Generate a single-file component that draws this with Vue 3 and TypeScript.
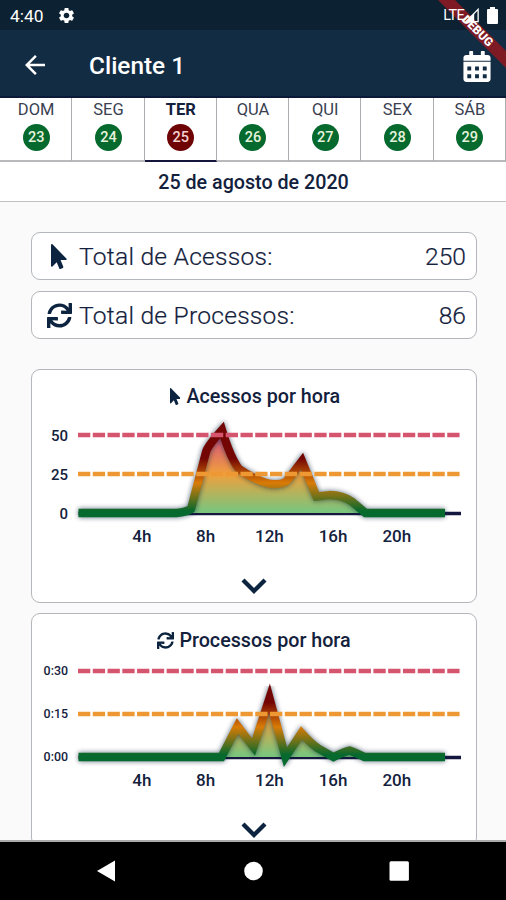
<script setup lang="ts">
interface Day {
  name: string
  num: number
  active?: boolean
}

interface Chart {
  id: string
  title: string
  icon: 'pointer' | 'sync'
  small: boolean
  labels: string[]
  step: number
  path: string
}

const BASE = 105
const X0 = 47

const days: Day[] = [
  { name: 'DOM', num: 23 },
  { name: 'SEG', num: 24 },
  { name: 'TER', num: 25, active: true },
  { name: 'QUA', num: 26 },
  { name: 'QUI', num: 27 },
  { name: 'SEX', num: 28 },
  { name: 'SÁB', num: 29 },
]

const charts: Chart[] = [
  {
    id: 'acessos',
    title: 'Acessos por hora',
    icon: 'pointer',
    small: false,
    labels: ['0', '25', '50'],
    step: 39,
    path: 'M47 105H145Q155 104 159.5 101L174.5 44Q176 38 190.500 22Q199 50 207.500 61C215 66 229 74 239 76Q252 77 256 72L270.500 53L285 88.500Q290 88 298 87Q311 87 321 94L334 105H413.500',
  },
  {
    id: 'processos',
    title: 'Processos por hora',
    icon: 'sync',
    small: true,
    labels: ['0:00', '0:15', '0:30'],
    step: 43,
    path: 'M47 105H190L206 74L222 95L238 46L254 105L270 81Q279 91 286 96L302 105Q312 100 318 98.500Q325 101 333 105H413.500',
  },
]

const hours = [4, 8, 12, 16, 20]
const hourX = (h: number): number => X0 - 0.3 + h * 15.93

const pointerPath =
  'M302.189 329.126H196.105l55.831 135.993c3.889 9.428-.555 19.999-9.444 23.999l-49.165 21.427c-9.165 4-19.443-.571-23.332-9.714l-53.053-129.136-86.664 89.138C18.729 472.71 0 463.554 0 447.977V18.299C0 1.899 19.921-6.096 30.277 5.443l284.412 292.542c11.472 11.179 3.007 31.141-12.5 31.141z'
const syncPath =
  'M440.65 12.57l4 82.77A247.16 247.16 0 0 0 255.83 8C134.73 8 33.91 94.92 12.29 209.82A12 12 0 0 0 24.09 224h49.05a12 12 0 0 0 11.67-9.26 175.91 175.91 0 0 1 317-56.94l-101.46-4.86a12 12 0 0 0-12.57 12v47.41a12 12 0 0 0 12 12H500a12 12 0 0 0 12-12V12a12 12 0 0 0-12-12h-47.37a12 12 0 0 0-11.98 12.57zM255.83 432a175.61 175.61 0 0 1-146-77.8l101.8 4.87a12 12 0 0 0 12.57-12v-47.4a12 12 0 0 0-12-12H12a12 12 0 0 0-12 12V500a12 12 0 0 0 12 12h47.35a12 12 0 0 0 12-12.6l-4.15-82.57A247.17 247.17 0 0 0 255.83 504c121.11 0 221.93-86.92 243.55-201.82a12 12 0 0 0-11.8-14.18h-49.05a12 12 0 0 0-11.67 9.26A175.86 175.86 0 0 1 255.83 432z'
</script>

<template>
  <div class="screen">
    <div class="status">
      <span class="clock">4:40</span>
      <svg class="gear" viewBox="0 0 24 24"><path d="M19.14 12.94c.04-.3.06-.61.06-.94 0-.32-.02-.64-.07-.94l2.030-1.580c.18-.14.23-.41.12-.61l-1.920-3.320c-.12-.22-.37-.29-.59-.22l-2.390.96c-.5-.38-1.030-.7-1.620-.94l-.36-2.540c-.04-.24-.24-.41-.48-.41h-3.840c-.24 0-.43.17-.47.41l-.36 2.540c-.59.24-1.130.57-1.620.94l-2.390-.96c-.22-.08-.47 0-.59.22L2.740 8.870c-.12.21-.08.47.12.61l2.030 1.580c-.05.3-.09.63-.09.94s.02.64.07.94l-2.030 1.580c-.18.14-.23.41-.12.61l1.920 3.320c.12.22.37.29.59.22l2.390-.96c.5.38 1.030.7 1.620.94l.36 2.540c.05.24.24.41.48.41h3.840c.24 0 .44-.17.47-.41l.36-2.540c.59-.24 1.130-.56 1.620-.94l2.390.96c.22.08.47 0 .59-.22l1.920-3.320c.12-.22.07-.47-.12-.61l-2.010-1.580zM12 15.600c-1.980 0-3.600-1.620-3.600-3.600s1.620-3.600 3.600-3.600 3.600 1.620 3.600 3.600-1.620 3.600-3.600 3.600z" /></svg>
      <span class="grow"></span>
      <span class="lte">LTE</span>
      <svg class="signal" viewBox="0 0 16 16"><path d="M1 15L15 1V15Z" fill="none" stroke="#fff" stroke-width="1.500" /><path d="M0 16L10.500 5.500V16Z" /></svg>
      <svg class="battery" viewBox="0 0 11 17"><path d="M3 0h5v2h2q1 0 1 1v13q0 1-1 1H1q-1 0-1-1V3q0-1 1-1h2z" /></svg>
    </div>
    <header class="appbar">
      <svg class="back" viewBox="0 0 24 24"><path d="M20 11H7.830l5.590-5.590L12 4l-8 8 8 8 1.410-1.410L7.830 13H20v-2z" /></svg>
      <h1>Cliente 1</h1>
      <svg class="calendar" viewBox="0 0 448 512"><path fill-rule="evenodd" d="M0 464c0 26.500 21.500 48 48 48h352c26.500 0 48-21.500 48-48V176H0zM64 256h64v64H64zM192 256h64v64h-64zM320 256h64v64h-64zM64 384h64v64H64zM192 384h64v64h-64zM320 384h64v64h-64zM400 64h-48V16c0-8.800-7.200-16-16-16h-32c-8.800 0-16 7.200-16 16v48H160V16c0-8.800-7.200-16-16-16h-32c-8.800 0-16 7.200-16 16v48H48C21.500 64 0 85.500 0 112v48h448v-48c0-26.500-21.500-48-48-48z" /></svg>
    </header>
    <svg class="ribbon" viewBox="0 0 70 70">
      <path d="M2 0H19L70 51V68Z" fill="#7d1a24" />
      <text transform="translate(41.500 31) rotate(45)" y="3.800" text-anchor="middle">DEBUG</text>
    </svg>

    <nav class="days">
      <div v-for="d in days" :key="d.num" class="day" :class="{ active: d.active }">
        <span class="name">{{ d.name }}</span>
        <span class="num">{{ d.num }}</span>
      </div>
    </nav>
    <div class="date">25 de agosto de 2020</div>

    <main class="content">
      <div class="total">
        <span class="slot"><svg class="pointer" viewBox="0 0 320 512"><path :d="pointerPath" /></svg></span>
        <span class="label">Total de Acessos:</span>
        <span>250</span>
      </div>
      <div class="total">
        <span class="slot"><svg class="sync" viewBox="0 0 512 512"><path :d="syncPath" /></svg></span>
        <span class="label">Total de Processos:</span>
        <span>86</span>
      </div>

      <section v-for="c in charts" :key="c.id" class="card" :class="c.id">
        <h2>
          <svg v-if="c.icon === 'pointer'" class="pointer" viewBox="0 0 320 512"><path :d="pointerPath" /></svg>
          <svg v-else class="sync" viewBox="0 0 512 512"><path :d="syncPath" /></svg>
          <span>{{ c.title }}</span>
        </h2>
        <svg class="plot" viewBox="0.500 0 444 145">
          <defs>
            <linearGradient :id="c.id + '-line'" gradientUnits="userSpaceOnUse" x1="0" y1="105" x2="0" y2="35">
              <stop offset="0.03" stop-color="#06692d" />
              <stop offset="0.43" stop-color="#d97b06" />
              <stop offset="0.78" stop-color="#730503" />
            </linearGradient>
            <linearGradient :id="c.id + '-fill'" gradientUnits="userSpaceOnUse" x1="0" y1="105" x2="0" y2="27">
              <stop offset="0.03" stop-color="#7cc47c" />
              <stop offset="0.5" stop-color="#f0a03c" />
              <stop offset="0.95" stop-color="#d5577a" />
            </linearGradient>
            <filter :id="c.id + '-blur'" x="-10%" y="-20%" width="120%" height="140%">
              <feGaussianBlur stdDeviation="2.5" />
            </filter>
          </defs>
          <line x1="47" y1="105.500" x2="429.500" y2="105.500" class="axis" />
          <path :d="c.path + 'V105H47Z'" :fill="`url(#${c.id}-fill)`" />
          <path :d="c.path" class="shadow" :filter="`url(#${c.id}-blur)`" />
          <path :d="c.path" class="series" :stroke="`url(#${c.id}-line)`" />
          <line x1="46.500" :y1="BASE - c.step" x2="428.500" :y2="BASE - c.step" class="limit warn" />
          <line x1="46.500" :y1="BASE - c.step * 2" x2="428.500" :y2="BASE - c.step * 2" class="limit crit" />
          <text v-for="(l, i) in c.labels" :key="l" x="36.500" :y="BASE - c.step * i + (c.small ? 4 : 5.5)" class="ylabel" :class="{ small: c.small }">{{ l }}</text>
          <text v-for="h in hours" :key="h" :x="hourX(h)" y="134" class="xlabel">{{ h }}h</text>
        </svg>
        <svg class="chevron" viewBox="0 0 26 18"><path d="M2 3L13 14L24 3" /></svg>
      </section>
    </main>

    <footer class="navbar">
      <svg viewBox="0 0 24 24"><path d="M2 12L20 1.500V22.500Z" /></svg>
      <svg viewBox="0 0 24 24"><circle cx="12.500" cy="12" r="9.300" /></svg>
      <svg viewBox="0 0 24 24"><rect x="2.500" y="2.300" width="19.400" height="19.400" rx="1.500" /></svg>
    </footer>
  </div>
</template>

<style>
body {
  margin: 0;
}
</style>

<style scoped>
.screen {
  position: relative;
  width: 506px;
  height: 900px;
  display: flex;
  flex-direction: column;
  overflow: hidden;
  background: linear-gradient(#0c2131 30px, #fafafa 30px);
  font-family: Roboto, sans-serif;
  color: #13213d;
}
.status {
  position: relative;
  z-index: 2;
  height: 30px;
  flex: none;
  display: flex;
  align-items: center;
  padding: 0 8px 0 10px;
  color: #fff;
  fill: #fff;
}
.clock {
  font-size: 17.4px;
  line-height: 30px;
  padding-top: 2px;
}
.gear {
  width: 19px;
  height: 19px;
  margin-left: 13px;
}
.grow {
  flex: 1;
}
.lte {
  font-size: 14.5px;
  letter-spacing: -0.7px;
}
.signal {
  width: 14px;
  height: 15px;
  margin: 0 8px 0 1px;
}
.battery {
  width: 11px;
  height: 17px;
}
.appbar {
  height: 68px;
  flex: none;
  box-sizing: border-box;
  display: flex;
  align-items: center;
  padding: 3px 15px 0 20px;
  background: #122c44;
  border-bottom: 2px solid #0a1a38;
  color: #fff;
  fill: #fff;
}
.back {
  width: 30px;
  height: 30px;
}
h1 {
  flex: 1;
  margin: 2px 0 0 39px;
  font-size: 24.4px;
  font-weight: 500;
  line-height: 30px;
}
.calendar {
  width: 28px;
  height: 31px;
  margin-top: 3px;
}
.ribbon {
  position: absolute;
  z-index: 1;
  top: 0;
  right: 0;
  width: 70px;
  height: 70px;
}
.ribbon text {
  font-size: 12px;
  font-weight: 900;
  fill: #fff;
}
.days {
  height: 64px;
  flex: none;
  display: grid;
  grid-template-columns: repeat(7, 1fr);
  background: #fff;
}
.day {
  display: flex;
  flex-direction: column;
  align-items: center;
  padding-left: 1px;
  border-right: 1px solid #adadb1;
  border-bottom: 2px solid #b9b9bc;
}
.day.active {
  border-bottom-color: #14143c;
}
.name {
  height: 26px;
  font-size: 16.5px;
  line-height: 23px;
  color: #3a3f52;
}
.active .name {
  font-weight: 700;
  color: #13213d;
}
.num {
  width: 27px;
  height: 27px;
  border-radius: 50%;
  background: #06692d;
  color: #e6f3dc;
  font-size: 14.5px;
  font-weight: 500;
  line-height: 27px;
  text-align: center;
}
.active .num {
  background: #6f0405;
  color: #f3d3d0;
}
.date {
  height: 40px;
  flex: none;
  box-sizing: border-box;
  padding-left: 1px;
  border-bottom: 1.500px solid #c0c0c3;
  background: #fff;
  text-align: center;
  font-size: 19.7px;
  font-weight: 500;
  line-height: 41px;
}
.content {
  flex: 1;
  min-height: 0;
  overflow: hidden;
  padding: 30px 29px 0 31px;
  border-bottom: 2px solid #aaa;
}
.total {
  height: 48px;
  box-sizing: border-box;
  display: flex;
  align-items: center;
  margin-bottom: 11px;
  padding: 1px 10px 0 15px;
  border: 1px solid #b3b6ba;
  border-radius: 9px;
  background: #fff;
  font-size: 24.600px;
  font-weight: 300;
  -webkit-text-stroke: 0.2px #13213d;
}
.label {
  flex: 1;
  letter-spacing: 0.25px;
}
.slot {
  width: 32px;
  height: 25px;
}
.slot svg {
  display: block;
  height: 25px;
  fill: #0d2440;
}
.slot .pointer {
  margin-left: 4px;
}
.card {
  height: 234px;
  box-sizing: border-box;
  display: flex;
  flex-direction: column;
  align-items: center;
  margin-bottom: 10px;
  border: 1px solid #b3b6ba;
  border-radius: 9px;
  background: #fff;
}
.acessos {
  margin-top: 30px;
}
h2 {
  height: 38px;
  flex: none;
  box-sizing: border-box;
  display: flex;
  align-items: center;
  gap: 5px;
  margin: 0;
  padding-top: 14px;
  font-size: 19.700px;
  font-weight: 500;
}
h2 svg {
  height: 17px;
  fill: #0d2440;
}
.acessos h2 {
  padding-left: 2px;
}
.acessos h2 svg {
  margin-right: 1px;
}
.plot {
  width: 444px;
  height: 145px;
  flex: none;
}
.axis {
  stroke: #14183f;
  stroke-width: 3.5;
}
.shadow {
  fill: none;
  stroke: #0b2138;
  stroke-width: 9;
  opacity: 0.6;
}
.series {
  fill: none;
  stroke-width: 8.3;
  stroke-miterlimit: 8;
}
.limit {
  stroke-width: 4.5;
  stroke-dasharray: 12.300 2.470;
}
.warn {
  stroke: #ee9833;
}
.crit {
  stroke: #d5556f;
}
.ylabel {
  font-size: 15px;
  font-weight: 500;
  text-anchor: end;
  fill: #13213d;
}
.ylabel.small {
  font-size: 12.400px;
}
.xlabel {
  font-size: 17px;
  font-weight: 500;
  text-anchor: middle;
  fill: #13213d;
}
.chevron {
  width: 26px;
  height: 18px;
  margin-top: 24px;
  fill: none;
  stroke: #0d2440;
  stroke-width: 4.300;
}
.navbar {
  height: 58px;
  flex: none;
  display: flex;
  align-items: center;
  justify-content: center;
  gap: 122px;
  background: #000;
  fill: #fff;
}
.navbar svg {
  width: 24px;
  height: 24px;
}
</style>
